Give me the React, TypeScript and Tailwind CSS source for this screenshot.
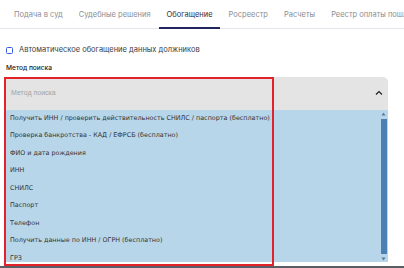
import React from "react";

const tabs = ["Подача в суд", "Судебные решения", "Обогащение", "Росреестр", "Расчеты", "Реестр оплаты пошлины"];
const items = [
  "Получить ИНН / проверить действительность СНИЛС / паспорта (бесплатно)",
  "Проверка банкротства - КАД / ЕФРСБ (бесплатно)",
  "ФИО и дата рождения",
  "ИНН",
  "СНИЛС",
  "Паспорт",
  "Телефон",
  "Получить данные по ИНН / ОГРН (бесплатно)",
  "ГРЗ",
];

export default function App() {
  return (
    <div className="relative w-[404px] h-[268px] overflow-hidden bg-white" style={{ fontFamily: "Inter, 'Noto Sans', sans-serif" }}>
      <div className="flex h-[29px] items-center border-b border-[#e3e5ea] pl-[14px] gap-[16px] whitespace-nowrap text-[7.5px] text-[#8a8d96]">
        {tabs.map((t) => (
          <div key={t} className={t === "Обогащение" ? "relative h-full flex items-center pt-[1px] text-[#2a2f4a]" : "h-full flex items-center pt-[1px]"}>
            {t}
            {t === "Обогащение" && <div className="absolute left-[-8px] right-[-7px] bottom-[-1px] h-[2px] bg-[#23265e]" />}
          </div>
        ))}
      </div>
      <div className="flex items-center gap-[6px] pl-[6px] mt-[15px] h-[12px]">
        <div className="w-[7px] h-[7px] rounded-[1.5px] border-[1.5px] border-[#3a5ee0]" />
        <span className="text-[7.5px] text-[#3a3d45]">Автоматическое обогащение данных должников</span>
      </div>
      <div className="pl-[6px] mt-[8px] text-[6.6px] font-medium text-[#222]">Метод поиска</div>
      <div className="ml-[5px] mt-[3px] w-[383px]" style={{ fontFamily: "'DejaVu Sans', Verdana, sans-serif" }}>
        <div className="h-[33px] bg-[#e4e4e4] rounded-tr-[5px] flex items-center justify-between pl-[6px] pr-[5px]">
          <span className="text-[7px] text-[#a3a3a3]" style={{ fontFamily: "'Liberation Sans', Arial, sans-serif" }}>Метод поиска</span>
          <svg width="8" height="6" viewBox="0 0 8 6"><path d="M1 4.5 L4 1.5 L7 4.5" fill="none" stroke="#222" strokeWidth="1.2" /></svg>
        </div>
        <div className="relative h-[152px] bg-[#b8d6ea] flex">
          <div className="flex-1">
            {items.map((it) => (
              <div key={it} className="h-[17.5px] flex items-center pl-[5px] text-[6.4px] text-[#333]">{it}</div>
            ))}
          </div>
          <div className="w-[9px] flex flex-col items-center pt-[2px] pb-[1px]">
            <svg width="5" height="4" viewBox="0 0 5 4"><path d="M0.5 3.5 L2.5 0.5 L4.5 3.5 Z" fill="#5a7a99" /></svg>
            <div className="flex-1 w-[6px] bg-[#4a80b4] my-[3px]" />
            <svg width="5" height="4" viewBox="0 0 5 4"><path d="M0.5 0.5 L2.5 3.5 L4.5 0.5 Z" fill="#5a7a99" /></svg>
          </div>
        </div>
      </div>
      <div className="absolute left-[4px] top-[77px] w-[270px] h-[189px] border-2 border-[#e2232b] pointer-events-none" />
      <div className="absolute left-0 right-0 bottom-0 h-[2px] bg-[#5a5f66]" />
    </div>
  );
}
